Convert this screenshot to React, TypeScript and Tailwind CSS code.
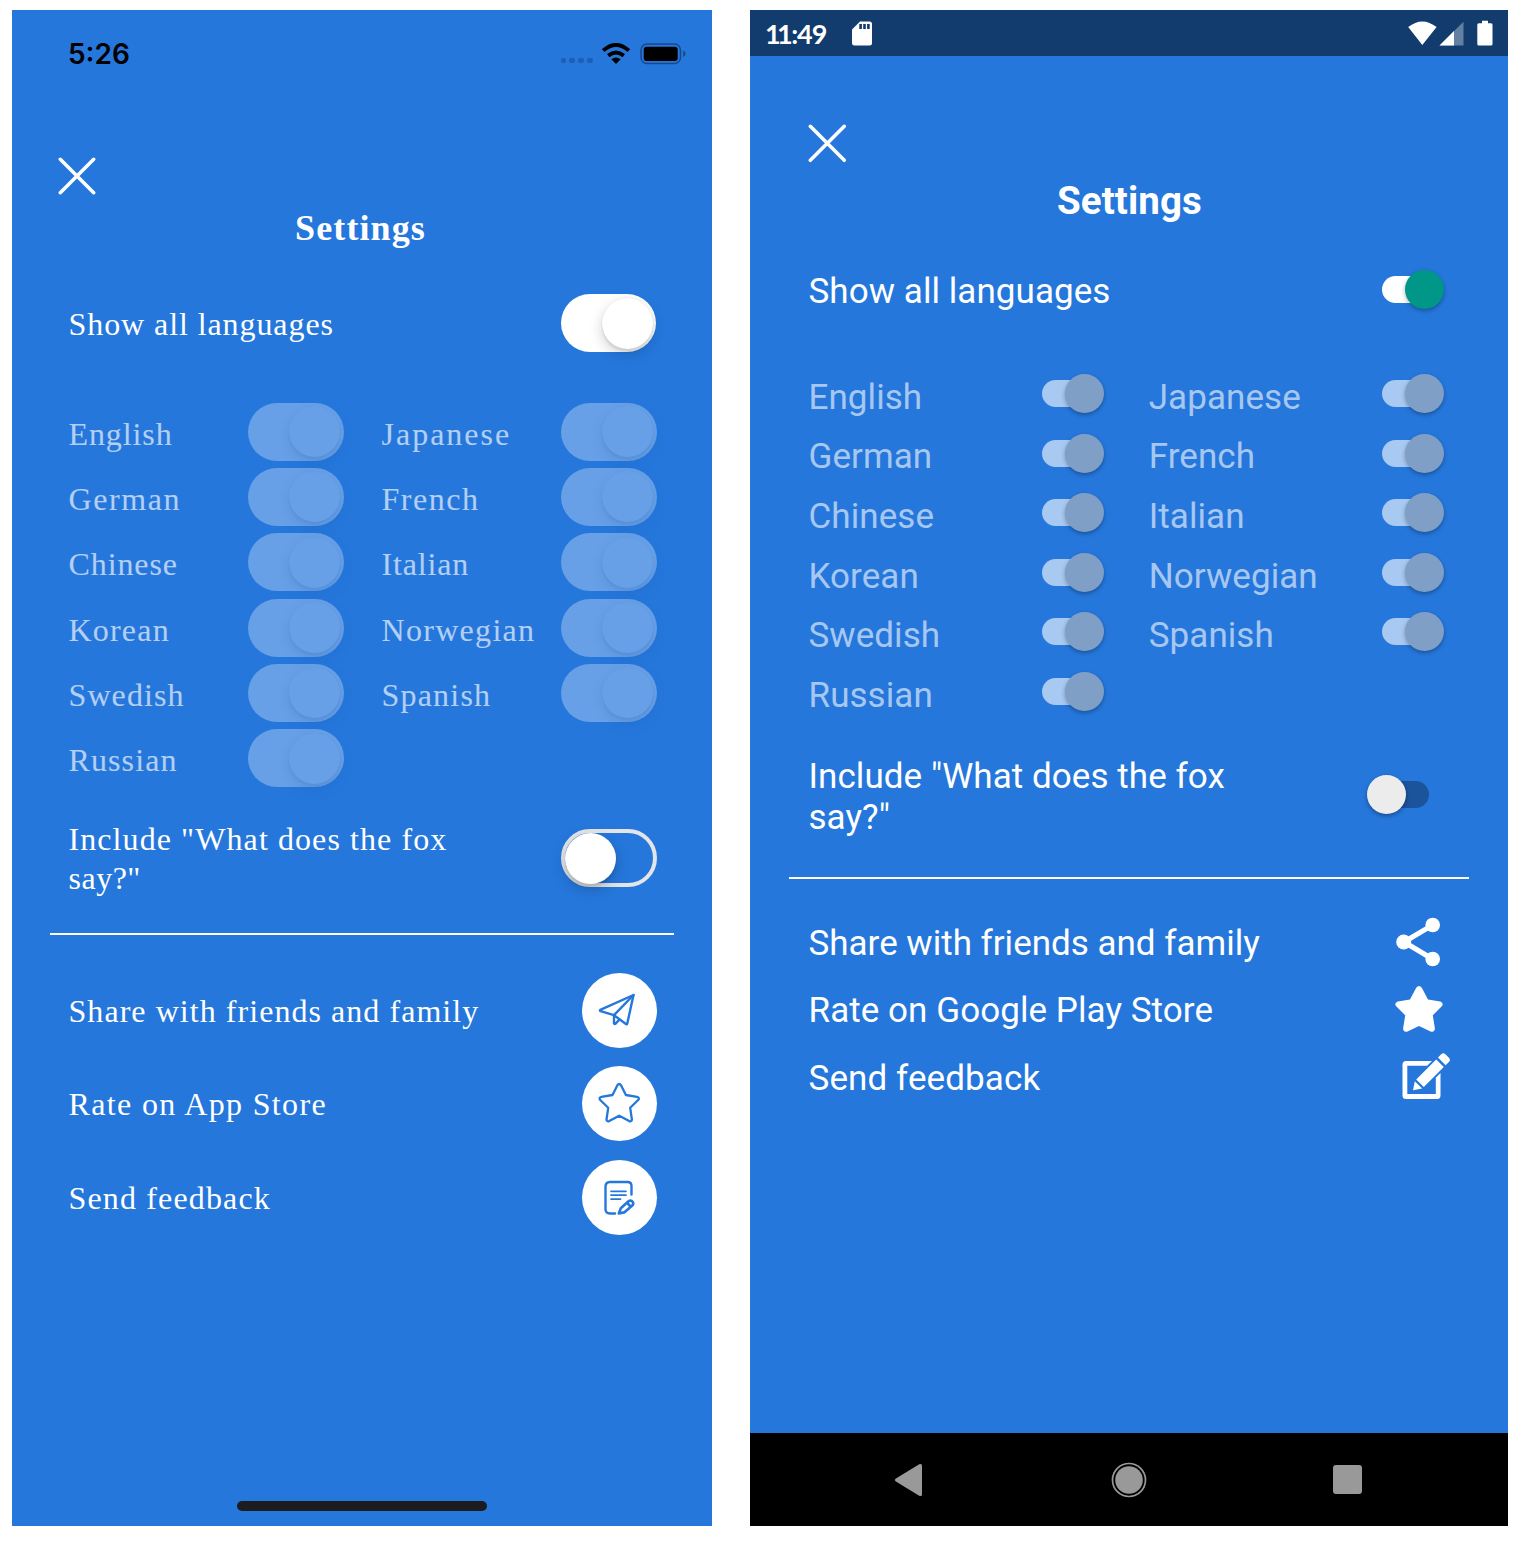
import React from "react";

type Label = { text: string; track: string };

const serif = "font-['Liberation_Serif',serif]";

const iosLanguages: Label[] = [
  { text: "English", track: "tracking-[0.9px]" },
  { text: "Japanese", track: "tracking-[2px]" },
  { text: "German", track: "tracking-[1.6px]" },
  { text: "French", track: "tracking-[1.55px]" },
  { text: "Chinese", track: "tracking-[0.9px]" },
  { text: "Italian", track: "tracking-[0.85px]" },
  { text: "Korean", track: "tracking-[1.2px]" },
  { text: "Norwegian", track: "tracking-[1.3px]" },
  { text: "Swedish", track: "tracking-[1.1px]" },
  { text: "Spanish", track: "tracking-[1.2px]" },
  { text: "Russian", track: "tracking-[1.1px]" },
];

function Cross({ className }: { className: string }) {
  return (
    <svg viewBox="0 0 38 38" className={className} fill="none" stroke="white" strokeWidth="3.5" strokeLinecap="round">
      <path d="M2.3 2.3 35.7 35.7M35.7 2.3 2.3 35.7" />
    </svg>
  );
}

function IosToggle({ on = true, disabled = false }: { on?: boolean; disabled?: boolean }) {
  if (!on) {
    return (
      <div className="flex h-[58px] w-[96px] shrink-0 items-center rounded-full border-4 border-[#e4e5e7]">
        <div className="size-[51px] shrink-0 rounded-full bg-white shadow-[0_5px_14px_rgba(0,0,0,0.22),0_3px_2px_rgba(0,0,0,0.08)]" />
      </div>
    );
  }
  return (
    <div className={`flex h-[58px] w-[95.5px] shrink-0 items-center justify-end rounded-full bg-white pr-[3.5px] ${disabled ? "opacity-30" : ""}`}>
      <div className="size-[51px] rounded-full bg-white shadow-[0_5px_14px_rgba(0,0,0,0.18),0_3px_2px_rgba(0,0,0,0.07),0_0_1px_rgba(0,0,0,0.12)]" />
    </div>
  );
}

function PlaneIcon() {
  return (
    <svg viewBox="0 0 75 75" className="size-[75px]" fill="none" stroke="#2577dc" strokeWidth="2.4" strokeLinejoin="round" strokeLinecap="round">
      <path d="M51.5 22 18.3 36.8Q17.5 37.6 18.5 38.2L32 42.2 44.3 51.2Q45 51.6 45.4 50Z" />
      <path d="M51.5 22 32 42.2V50.5Q32.5 51.5 34 50.3L37.3 46.6" />
    </svg>
  );
}

function StarOutline() {
  return (
    <svg viewBox="0 0 75 75" className="size-[75px]" fill="none" stroke="#2577dc" strokeWidth="2.3" strokeLinejoin="round">
      <path d="M35.4 19.2Q37.2 16.8 39 19.2L43.9 29 55 30.8Q57.8 31.6 56.4 33.8L48.2 41.8 49.9 53.5Q49.6 55.9 47.2 55.1L37.2 49.7 27.2 55.1Q24.8 55.9 24.5 53.5L26.2 41.8 18 33.8Q16.6 31.6 19.4 30.8L30.5 29Z" />
    </svg>
  );
}

function NoteIcon() {
  return (
    <svg viewBox="0 0 75 75" className="size-[75px]" fill="none" stroke="#2577dc" strokeWidth="2.4" strokeLinecap="round" strokeLinejoin="round">
      <path d="M33 53.5H28Q23.5 53.5 23.5 49V27Q23.5 22 28 22H45.5Q49.5 22 49.5 26V34.5" />
      <path d="M29 31.3H44M29 35.2H44M29 39.1H38.5" strokeWidth="1.7" />
      <path d="M36.8 53.4 38.8 48.2 46.5 41.2Q49.2 39.8 51 42.2 51.8 44.2 50 45.8L42.2 52.4ZM45 42.7 48.5 46.5" strokeWidth="2.6" />
    </svg>
  );
}

const iosActions = [
  { text: "Share with friends and family", track: "tracking-[1.05px]", icon: <PlaneIcon /> },
  { text: "Rate on App Store", track: "tracking-[1.35px]", icon: <StarOutline /> },
  { text: "Send feedback", track: "tracking-[1.15px]", icon: <NoteIcon /> },
];

function IosPhone() {
  return (
    <section className={`flex h-[1516px] w-[700px] shrink-0 flex-col bg-[#2577dc] text-[32px] whitespace-nowrap text-white ${serif}`}>
      <header className="flex h-[86px] shrink-0 items-center justify-between pr-[26.3px] pl-[56px] text-black">
        <span className="pt-px font-['Inter',sans-serif] text-[28px] font-semibold">5:26</span>
        <div className="flex items-center pt-px">
          <div className="mt-[14px] mr-[9px] flex gap-[3px]">
            {[0, 1, 2, 3].map((i) => (
              <i key={i} className="size-[5.8px] rounded-[2px] bg-black/20" />
            ))}
          </div>
          <svg viewBox="0 0 28 21" className="mr-[10px] h-[21px] w-[28px]">
            <g fill="none" stroke="black" strokeWidth="4">
              <path d="M1.3 7.6Q14-3.6 26.7 7.6" />
              <path d="M6.2 12.6Q14 6.4 21.8 12.6" />
            </g>
            <path d="M9.4 16.3Q14 12.7 18.6 16.3L14 21Z" />
          </svg>
          <svg viewBox="0 0 46 22" className="h-[22px] w-[46px]">
            <rect x="1" y="1" width="39.5" height="19.5" rx="6" fill="none" stroke="#174a89" strokeWidth="1.5" />
            <rect x="3.7" y="3.7" width="34" height="14.2" rx="3" />
            <path d="M43.2 7.5Q45.6 8.5 45.6 10.8T43.2 14Z" fill="#174a89" />
          </svg>
        </div>
      </header>
      <Cross className="mt-[61px] ml-[46px] size-[38px] shrink-0" />
      <h1 className="mt-[13px] h-[40px] shrink-0 pr-[3px] text-center text-[36px] leading-[40px] font-bold tracking-[1.1px]">Settings</h1>
      <div className="mt-[46px] flex shrink-0 items-center justify-between pr-[56px] pl-[56.5px]">
        <span className="pt-[2px] tracking-[0.92px]">Show all languages</span>
        <IosToggle />
      </div>
      <div className="mt-[47px] grid shrink-0 grid-cols-2 gap-x-[38px] pr-[55.5px] pl-[56.5px]">
        {iosLanguages.map((l) => (
          <div key={l.text} className="flex h-[65.3px] items-center justify-between">
            <span className={`pt-[4px] text-white/65 ${l.track}`}>{l.text}</span>
            <IosToggle disabled />
          </div>
        ))}
      </div>
      <div className="mt-[27.2px] flex shrink-0 items-center justify-between pr-[55.5px] pl-[56.5px]">
        <p className="pt-[2px] leading-[39.5px] tracking-[1.08px]">
          Include "What does the fox
          <br />
          <span className="tracking-[0.5px]">say?"</span>
        </p>
        <IosToggle on={false} />
      </div>
      <hr className="mx-[38px] mt-[34.5px] h-[2px] shrink-0 border-0 bg-white" />
      <div className="mt-[37.5px] flex shrink-0 flex-col gap-[18.3px] pr-[55.5px] pl-[56.5px]">
        {iosActions.map((a) => (
          <div key={a.text} className="flex h-[75px] items-center justify-between">
            <span className="pt-px">
              <span className={a.track}>{a.text}</span>
            </span>
            <div className="size-[75px] rounded-full bg-white">{a.icon}</div>
          </div>
        ))}
      </div>
      <div className="mx-auto mt-auto mb-[15px] h-[10px] w-[250px] shrink-0 rounded-full bg-[#1c1c1e]" />
    </section>
  );
}

const androidLanguages = ["English", "Japanese", "German", "French", "Chinese", "Italian", "Korean", "Norwegian", "Swedish", "Spanish", "Russian"];

function AndroidSwitch({ state }: { state: "on" | "off" | "disabled" }) {
  if (state === "off") {
    return (
      <div className="flex h-[40px] w-[77px] shrink-0 items-center">
        <div className="z-10 size-[39px] rounded-full bg-[#ececec] shadow-[0_2px_4px_rgba(0,0,0,0.35)]" />
        <div className="-ml-[25px] h-[27px] w-[48px] rounded-full bg-[#1b549b]" />
      </div>
    );
  }
  return (
    <div className="flex h-[40px] w-[62px] shrink-0 items-center">
      <div className={`h-[27px] w-[48px] rounded-full ${state === "on" ? "bg-white" : "bg-[#a8c9f1]"}`} />
      <div className={`-ml-[25px] size-[39px] shrink-0 rounded-full shadow-[0_2px_4px_rgba(0,0,0,0.3)] ${state === "on" ? "bg-[#009688]" : "bg-[#7f9fc6]"}`} />
    </div>
  );
}

function ShareIcon() {
  return (
    <svg viewBox="0 0 46 50" className="mr-[4px] h-[50px] w-[46px]" fill="white">
      <path d="M9 25 37.5 8.2M9 25 37.5 42" stroke="white" strokeWidth="5" />
      <circle cx="8.7" cy="25" r="7.5" />
      <circle cx="37.7" cy="8" r="7.3" />
      <circle cx="37.7" cy="42" r="7.3" />
    </svg>
  );
}

function StarIcon() {
  return (
    <svg viewBox="0 0 48 46" className="mr-[2px] h-[46px] w-[48px]" fill="white">
      <path d="M21.2 1.8Q24-1.6 26.8 1.8L33 13.6 45.3 15.4Q49.2 17.3 46.8 20.3L37.8 29.3 39.9 42.5Q39.4 46.8 35.5 45.5L24 40 12.5 45.5Q8.6 46.8 8.1 42.5L10.2 29.3 1.2 20.3Q-1.2 17.3 2.7 15.4L15 13.6Z" />
    </svg>
  );
}

function EditIcon() {
  return (
    <svg viewBox="0 0 48 47" className="-mr-[5px] h-[47px] w-[48px]" fill="white">
      <path d="M30 8H4Q.5 8 .5 11.5V42.5Q.5 46 4 46H35Q38.5 46 38.5 42.5V20L33.8 24.7V41H5.3V12.8H25.2Z" />
      <path d="M34.2 6.4 41.8 14 21.8 34 14.2 26.4ZM12.8 28.2 20.2 35.4 11 37.3ZM36 4.6 39.2 1.3Q41.3-.8 43.4 1.3L46.9 4.8Q49 6.9 46.9 9L43.6 12.2Z" />
    </svg>
  );
}

const androidActions = [
  { text: "Share with friends and family", track: "tracking-[0px]", icon: <ShareIcon /> },
  { text: "Rate on Google Play Store", track: "tracking-[0.06px]", icon: <StarIcon /> },
  { text: "Send feedback", track: "tracking-[0.1px]", icon: <EditIcon /> },
];

function AndroidPhone() {
  return (
    <section className="flex h-[1516px] w-[758px] shrink-0 flex-col bg-[#2577dc] font-['Roboto',sans-serif] text-[35px] tracking-[0.06px] whitespace-nowrap text-white">
      <header className="flex h-[46.4px] shrink-0 items-center bg-[#123c6e] pr-[15px] pl-[15px]">
        <span className="w-[87px] font-['Lato',sans-serif] text-[27px] leading-none font-bold tracking-[-1px]">
          <span className="tracking-[-3.6px]">1</span>
          <span className="tracking-[-1.6px]">1</span>:49
        </span>
        <svg viewBox="0 0 20 25" className="h-[25px] w-[20px]">
          <path d="M8 .5H17.5Q20 .5 20 3V22Q20 24.5 17.5 24.5H2.5Q0 24.5 0 22V8.5Z" fill="white" />
          <path d="M7.3 3h2.6v5h-2.6zM11.2 3h2.6v5h-2.6zM15.1 3h2.6v5h-2.6z" fill="#123c6e" />
        </svg>
        <svg viewBox="0 0 86 26" className="ml-auto h-[26px] w-[86px]" fill="white">
          <path d="M1.2 7.1Q15.3-4.3 29.6 7.1L15.3 24.9Z" />
          <path d="M32.5 25.4 56.5 1.8V25.4Z" opacity=".35" />
          <path d="M32.5 25.4 47 11V25.4Z" />
          <path d="M75 .8h6V3.2h3Q85.5 3.2 85.5 4.7V24Q85.5 25.5 84 25.5H71.8Q70.3 25.5 70.3 24V4.7Q70.3 3.2 71.8 3.2h3.2Z" />
        </svg>
      </header>
      <Cross className="mt-[68px] ml-[58px] size-[38.6px] shrink-0" />
      <h1 className="mt-[18px] h-[40px] shrink-0 pl-px text-center text-[38.5px] leading-[40px] font-bold tracking-[0.1px]">Settings</h1>
      <div className="mt-[48.6px] flex h-[40px] shrink-0 items-center justify-between pr-[64px] pl-[58.5px]">
        <span className="pt-[6px]">Show all languages</span>
        <AndroidSwitch state="on" />
      </div>
      <div className="mt-[54px] grid shrink-0 grid-cols-2 gap-x-[45px] pr-[64px] pl-[58.5px]">
        {androidLanguages.map((l) => (
          <div key={l} className="flex h-[59.65px] items-center justify-between">
            <span className="pt-[9px] text-white/60">{l}</span>
            <AndroidSwitch state="disabled" />
          </div>
        ))}
      </div>
      <div className="mt-[32.5px] flex shrink-0 items-center justify-between pr-[64px] pl-[58.5px]">
        <p className="pt-[2px] leading-[41px]">
          Include "What does the fox
          <br />
          say?"
        </p>
        <div className="pb-[2px]">
          <AndroidSwitch state="off" />
        </div>
      </div>
      <hr className="mx-[39px] mt-[39px] h-[2px] shrink-0 border-0 bg-white" />
      <div className="mt-[29px] flex shrink-0 flex-col pr-[63px] pl-[58.5px]">
        {androidActions.map((a) => (
          <div key={a.text} className="flex h-[67.4px] items-center justify-between">
            <span className={`pt-[5px] ${a.track}`}>{a.text}</span>
            {a.icon}
          </div>
        ))}
      </div>
      <footer className="mt-auto flex h-[93px] shrink-0 items-center justify-between bg-black pr-[146px] pl-[144px]">
        <svg viewBox="0 0 28 34" className="h-[34px] w-[28px]" fill="#999">
          <path d="M25.2 1.3Q28 .2 28 2.5V31.5Q28 33.8 25.2 32.7L1.5 18.2Q0 17 1.5 15.8Z" />
        </svg>
        <svg viewBox="0 0 36 36" className="ml-[3px] size-[36px]">
          <circle cx="18" cy="18" r="16.5" fill="none" stroke="#999" strokeWidth="1.7" />
          <circle cx="18" cy="18" r="13.8" fill="#999" />
        </svg>
        <div className="size-[29px] rounded-[3px] bg-[#999]" />
      </footer>
    </section>
  );
}

export default function App() {
  return (
    <main className="flex h-[1542px] w-[1522px] gap-[38px] overflow-hidden bg-white pt-[10px] pl-[12px]">
      <IosPhone />
      <AndroidPhone />
    </main>
  );
}
